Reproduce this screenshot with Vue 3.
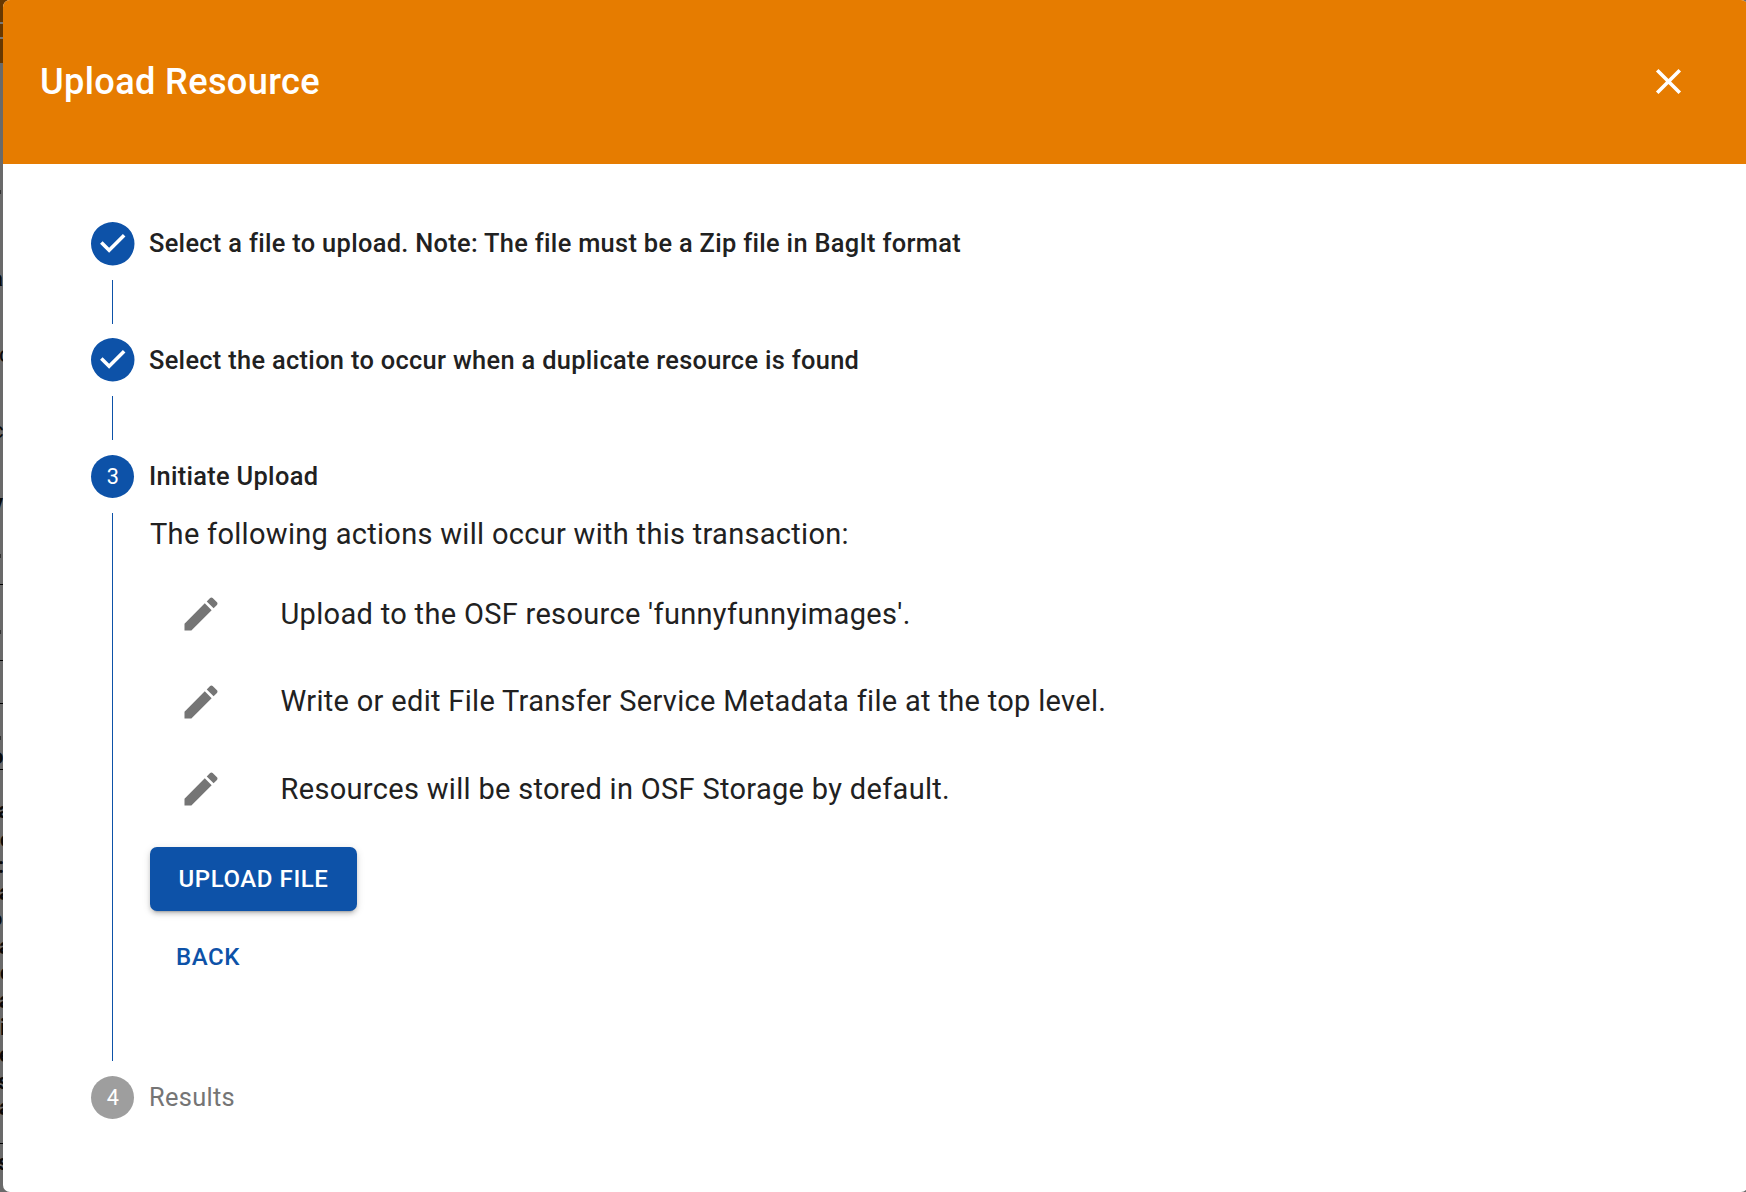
<script setup>
const steps = [
  { label: 'Select a file to upload. Note: The file must be a Zip file in BagIt format', state: 'done' },
  { label: 'Select the action to occur when a duplicate resource is found', state: 'done second' },
  { label: 'Initiate Upload', state: 'active' },
  { label: 'Results', state: 'pending' },
]

const actions = [
  "Upload to the OSF resource 'funnyfunnyimages'.",
  'Write or edit File Transfer Service Metadata file at the top level.',
  'Resources will be stored in OSF Storage by default.',
]

// Ends of the page's text lines that stay visible beside the dialog.
const glyphs = [
  { t: 'a', y: 286, x: -9, b: true },
  { t: 'c', y: 362, x: -1 },
  { t: 'c', y: 438, x: -8 },
  { t: 'v', y: 510, x: -8, b: true },
  { t: 'o', y: 764, x: -9, b: true },
  { t: 'a', y: 818, x: -2, b: true },
  { t: 'c', y: 847, x: 0, b: true },
  { t: ':', y: 873, x: -2, b: true },
  { t: 'a', y: 900, x: -1, b: true },
  { t: 'o', y: 926, x: -10 },
  { t: 'a', y: 954, x: -1, b: true },
  { t: 'c', y: 980, x: 0, b: true },
  { t: 'a', y: 1008, x: -1, b: true },
  { t: 'i', y: 1035, x: 0, b: true },
  { t: 'e', y: 1062, x: -1, b: true },
  { t: 's', y: 1089, x: -2, b: true },
  { t: 'a', y: 1115, x: -1, b: true },
  { t: 's', y: 1170, x: -2, b: true },
]
const rules = [584, 660, 703, 769, 1143]
const ticks = [190, 554, 630, 736]
</script>

<template>
  <div class="screen">
    <div class="page" aria-hidden="true">
      <div class="appbar"><i></i><i></i></div>
      <span v-for="g in glyphs" :key="g.y" class="glyph" :class="{ bold: g.b }" :style="{ top: g.y - 17 + 'px', left: g.x + 'px' }">{{ g.t }}</span>
      <span v-for="y in rules" :key="y" class="rule" :style="{ top: y + 'px' }"></span>
      <span v-for="y in ticks" :key="y" class="tick" :style="{ top: y + 'px' }"></span>
    </div>
    <section class="dialog" role="dialog">
      <header class="header">
        <h2 class="title">Upload Resource</h2>
        <button class="close" aria-label="Close">
          <svg viewBox="0 0 24 24"><path d="M19 6.41L17.59 5 12 10.59 6.41 5 5 6.41 10.59 12 5 17.59 6.41 19 12 13.41 17.59 19 19 17.59 13.41 12z" /></svg>
        </button>
      </header>
      <div class="stepper">
        <div v-for="(s, i) in steps" :key="i" class="step" :class="s.state">
          <div class="head">
            <svg v-if="i < 2" class="mark" viewBox="0 0 24 24"><path d="M12 0a12 12 0 1 0 0 24 12 12 0 0 0 0-24zm-2 17l-5-5 1.4-1.4 3.6 3.6 7.6-7.6L19 8l-9 9z" /></svg>
            <span v-else class="mark num">{{ i + 1 }}</span>
            <span class="label">{{ s.label }}</span>
          </div>
          <div v-if="i < steps.length - 1" class="body">
            <div v-if="s.state === 'active'" class="content">
              <p class="intro">The following actions will occur with this transaction:</p>
              <ul class="list">
                <li v-for="a in actions" :key="a">
                  <svg class="pencil" viewBox="0 0 24 24"><path d="M3 17.25V21h3.75L17.81 9.94l-3.75-3.75L3 17.25zM20.71 7.04c.39-.39.39-1.02 0-1.41l-2.34-2.34a.9959.9959 0 0 0-1.41 0l-1.83 1.83 3.75 3.75 1.83-1.83z" /></svg>
                  <span>{{ a }}</span>
                </li>
              </ul>
              <button class="btn primary">UPLOAD FILE</button>
              <button class="btn text">BACK</button>
            </div>
          </div>
        </div>
      </div>
    </section>
  </div>
</template>

<style>
body { margin: 0; overflow: hidden; }
</style>

<style scoped>
.screen {
  position: relative;
  width: 1746px;
  height: 1192px;
  padding-left: 3px;
  box-sizing: border-box;
  overflow: hidden;
  background: #6a6a6a;
  font-family: Roboto, sans-serif;
  color: #212121;
}
.page { position: absolute; left: 0; top: 0; width: 10px; height: 1192px; overflow: hidden; }
.appbar { height: 63px; background: #683800; display: flex; flex-direction: column; padding-top: 22px; gap: 13px; box-sizing: border-box; }
.appbar i { height: 2px; background: #777; }
.glyph { position: absolute; font-size: 22px; line-height: 20px; color: #0b0b0b; }
.glyph.bold { font-weight: 700; }
.rule { position: absolute; left: 0; width: 4px; height: 1px; background: #000; }
.tick { position: absolute; left: 0; width: 1px; height: 4px; background: #333; }
.dialog { position: relative; height: 1192px; margin-right: -2px; background: #fff; border-radius: 7px; overflow: hidden; }
.header {
  height: 164px;
  padding: 0 57.7px 0 37px;
  box-sizing: border-box;
  display: flex;
  align-items: center;
  justify-content: space-between;
  background: #e67c00;
  color: #fff;
}
.title { margin: 0; font-size: 36.2px; font-weight: 500; letter-spacing: 0.34px; line-height: 58px; }
button { border: 0; background: none; padding: 0; font-family: inherit; color: inherit; }
.close { display: flex; margin-bottom: 1px; }
.close svg { width: 43px; height: 43px; fill: #fff; }
.stepper { padding: 58px 88px 0; }
.head { display: flex; align-items: flex-start; height: 44px; }
.mark { width: 43.5px; height: 43.5px; flex: none; fill: #0d52a8; }
.num {
  width: 43px;
  height: 43px;
  border-radius: 50%;
  background: #0d52a8;
  color: #fff;
  font-size: 21.7px;
  line-height: 43px;
  text-align: center;
  text-indent: 0.6px;
}
.pending .num { background: #9e9e9e; }
.label { margin: 3px 0 0 14.5px; font-size: 25.4px; font-weight: 500; letter-spacing: 0.315px; line-height: 36px; white-space: nowrap; }
.num + .label { margin-left: 15px; }
.second .label { margin-top: 4px; }
.pending .label { font-weight: 400; color: #757575; }
.body { margin: 14px 0 14px 21px; height: 44px; border-left: 1px solid #0d52a8; }
.second .body { margin-bottom: 15px; }
.active .body { height: 548px; margin-bottom: 15px; }
.content { margin-left: 37px; display: flex; flex-direction: column; align-items: flex-start; }
.intro { margin: 0; font-size: 29px; line-height: 43.5px; letter-spacing: 0.3px; }
.list { list-style: none; margin: 13.5px 0 14.5px; padding: 0; }
.list li { display: flex; align-items: center; height: 87.5px; font-size: 29px; letter-spacing: 0.315px; white-space: nowrap; }
.pencil { width: 44px; height: 44px; margin: 1px 58px 0 28.5px; fill: #757575; }
.btn { font-size: 24px; font-weight: 500; letter-spacing: 0.57px; line-height: 43px; white-space: nowrap; }
.primary {
  width: 207px;
  height: 64px;
  border-radius: 7px;
  background: #0d52a8;
  color: #fff;
  box-shadow: 0 5px 2px -4px rgba(0,0,0,.2), 0 3px 4px rgba(0,0,0,.14), 0 2px 9px rgba(0,0,0,.12);
}
.text { margin: 25px 0 0 26px; color: #0d52a8; }
</style>
